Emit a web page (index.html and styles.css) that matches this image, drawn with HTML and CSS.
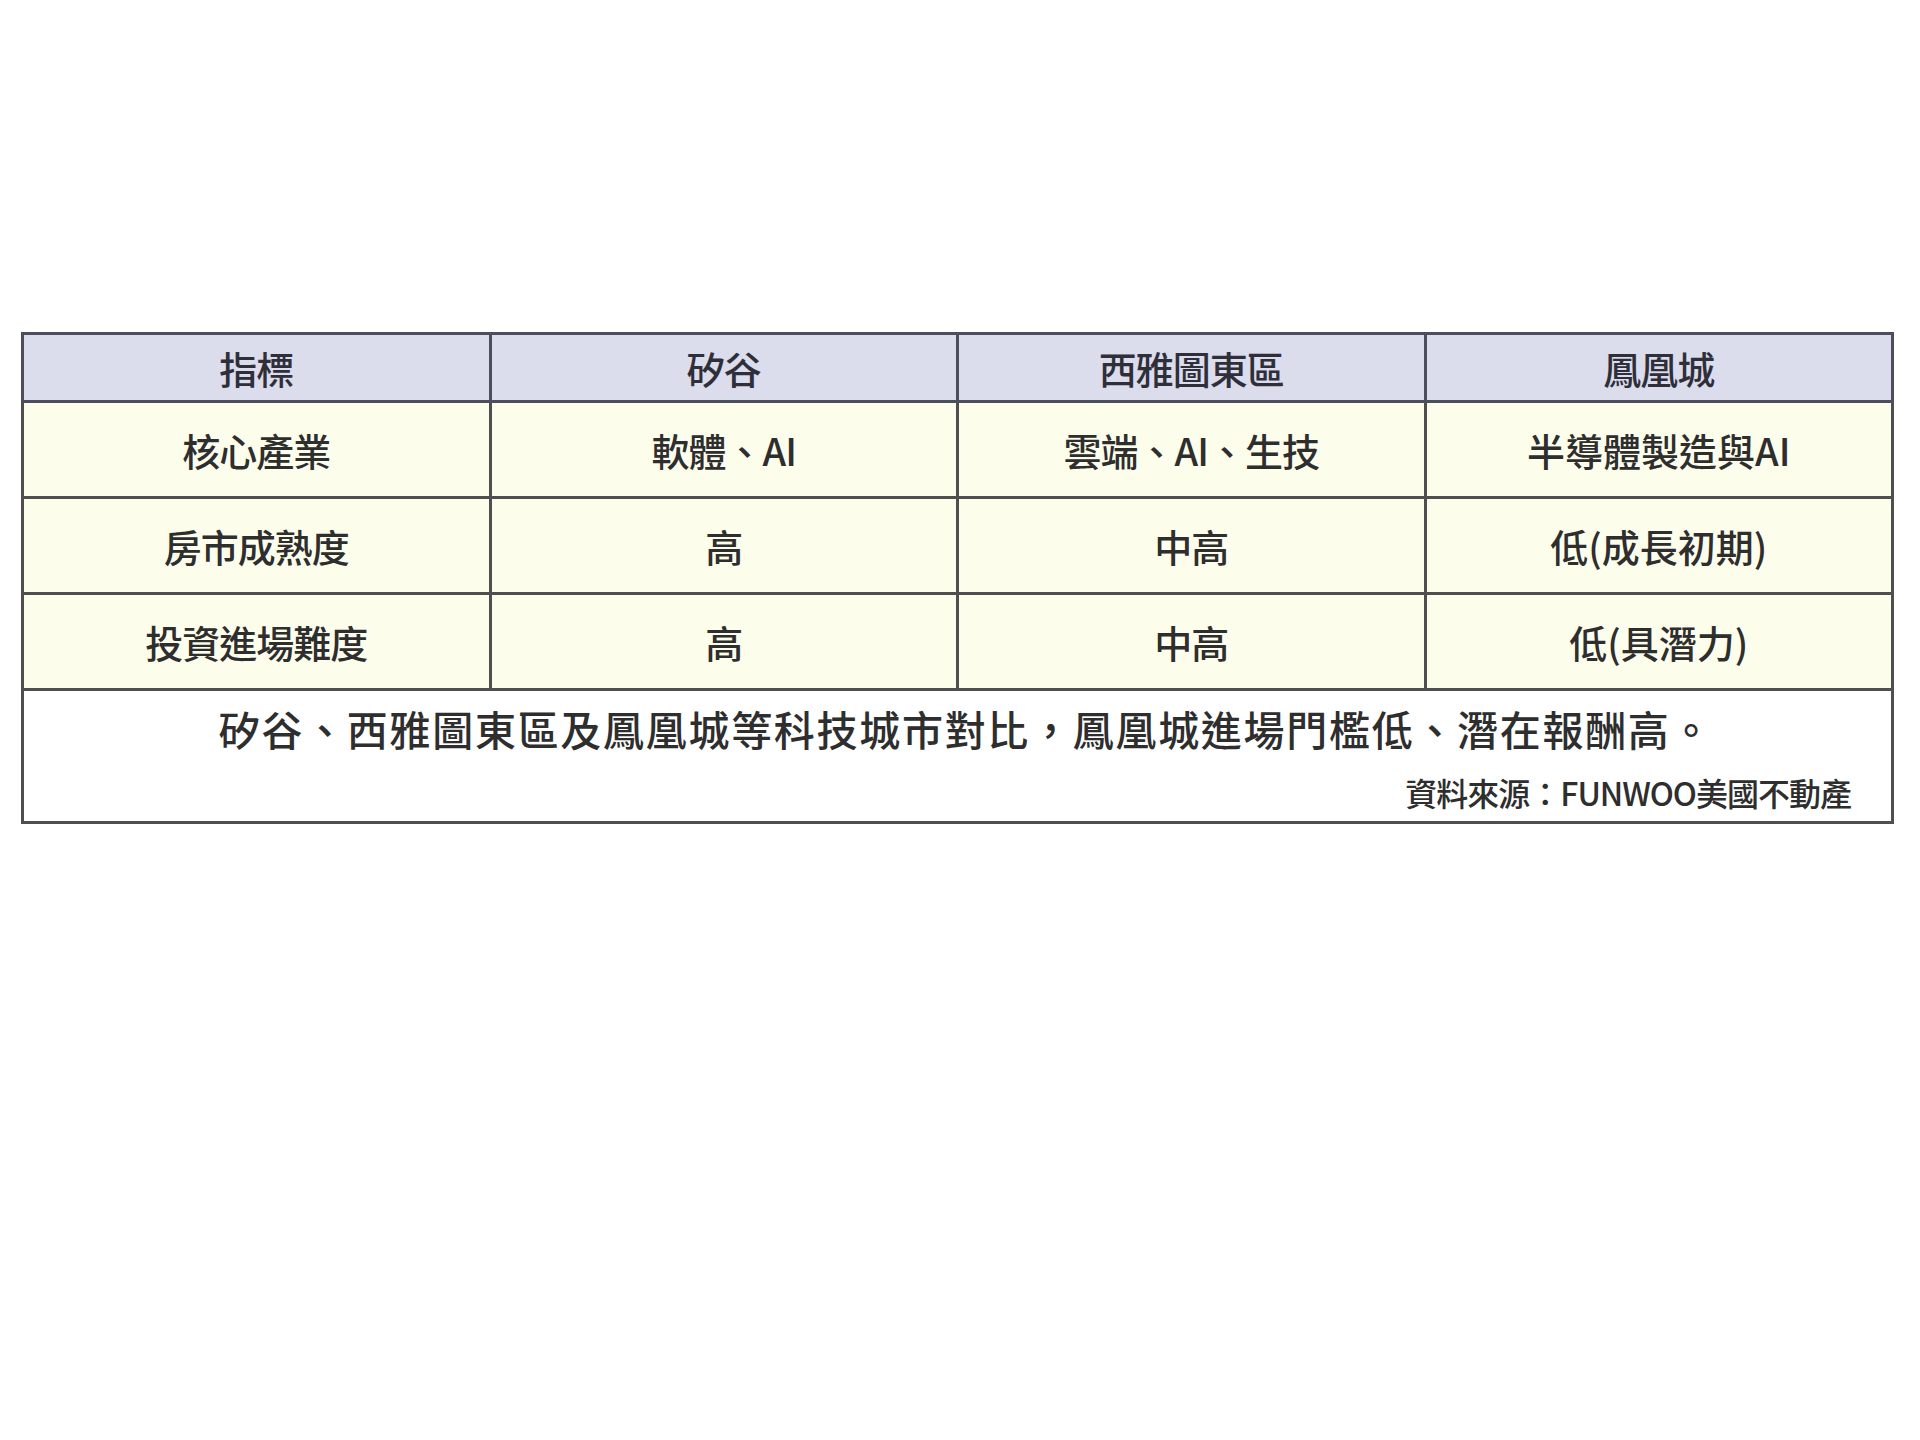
FILE: index.html
```html
<!DOCTYPE html>
<html lang="zh-Hant">
<head>
<meta charset="utf-8">
<title>科技城市對比</title>
<link rel="stylesheet" href="styles.css">
</head>
<body>
<main class="page">
  <table class="compare">
    <thead>
      <tr class="head-row">
        <th>指標</th>
        <th>矽谷</th>
        <th>西雅圖東區</th>
        <th>鳳凰城</th>
      </tr>
    </thead>
    <tbody>
      <tr class="row">
        <td>核心產業</td>
        <td>軟體、AI</td>
        <td>雲端、AI、生技</td>
        <td>半導體製造與AI</td>
      </tr>
      <tr class="row">
        <td>房市成熟度</td>
        <td>高</td>
        <td>中高</td>
        <td>低(成長初期)</td>
      </tr>
      <tr class="row">
        <td>投資進場難度</td>
        <td>高</td>
        <td>中高</td>
        <td>低(具潛力)</td>
      </tr>
    </tbody>
    <tfoot>
      <tr>
        <td class="foot" colspan="4">
          <p class="caption">矽谷、西雅圖東區及鳳凰城等科技城市對比，鳳凰城進場門檻低、潛在報酬高。</p>
          <p class="source">資料來源：FUNWOO美國不動產</p>
        </td>
      </tr>
    </tfoot>
  </table>
</main>
</body>
</html>
```

FILE: styles.css
```css
html, body {
  margin: 0;
  padding: 0;
  background: #ffffff;
}

body {
  font-family: "Noto Sans CJK TC", "Noto Sans CJK SC", "Noto Sans", sans-serif;
  color: #2e2e2e;
}

.page {
  padding: 332px 0 0 21px;
}

.compare {
  width: 1873px;
  border-collapse: collapse;
  table-layout: fixed;
  border: 3px solid #4f4f4f;
}

.compare th,
.compare td {
  border: 3px solid #4f4f4f;
  text-align: center;
  vertical-align: middle;
  padding: 0;
  font-size: 38px;
  font-weight: 500;
  line-height: 1.2;
  letter-spacing: -1px;
}

.head-row th {
  height: 65px;
  background: #dbdcec;
  color: #2f2f3a;
  border-color: #4d4e5c;
}

.row td {
  height: 93px;
  background: #fdfdec;
}

.row td:last-child {
  letter-spacing: 0;
}

.compare .foot {
  background: #ffffff;
  padding: 13px 40px 10px 40px;
}

.caption {
  margin: 0;
  padding-left: 17px;
  font-size: 41px;
  line-height: 49px;
  text-align: center;
  letter-spacing: 1.7px;
}

.source {
  margin: 20px 0 0 0;
  font-size: 32px;
  line-height: 38px;
  text-align: right;
  letter-spacing: -1px;
}
```
